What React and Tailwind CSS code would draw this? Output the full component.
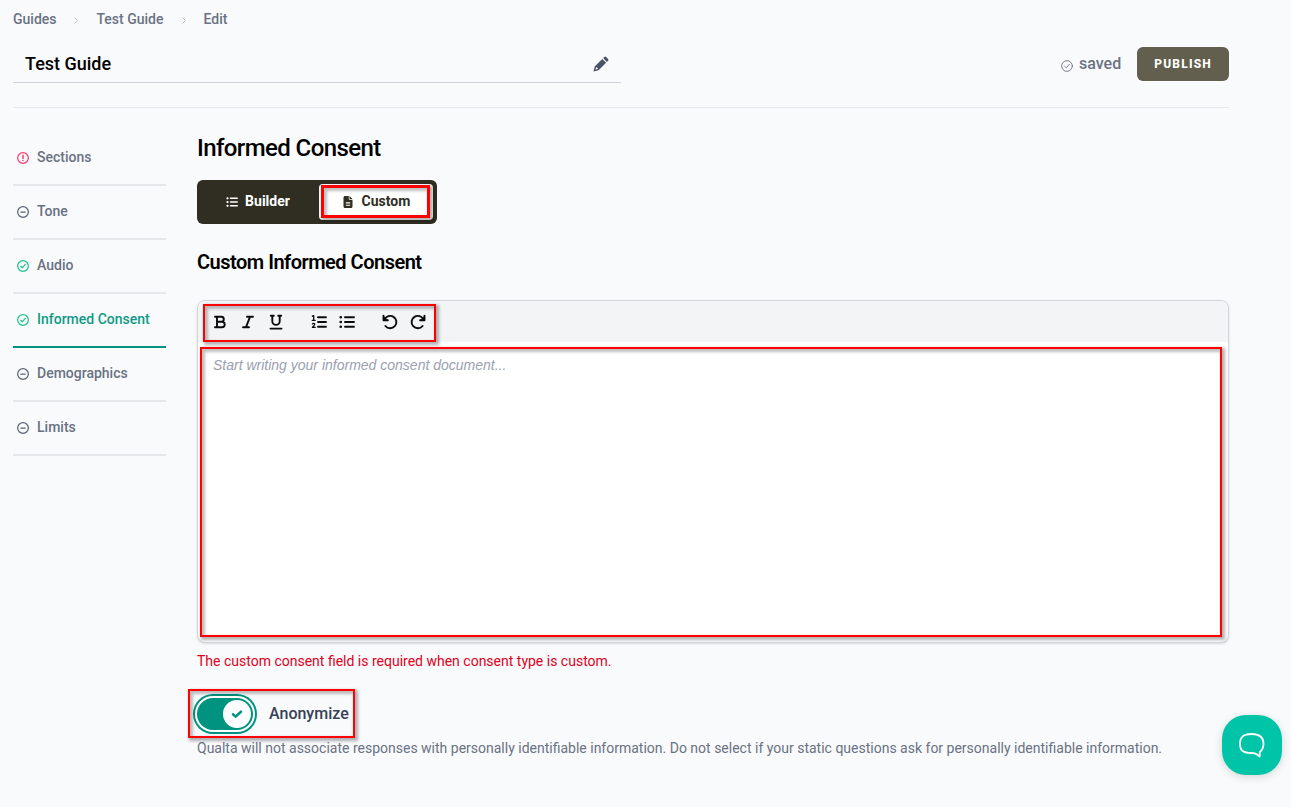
import React, { useState } from 'react';
import { FaFileLines, FaListUl } from 'react-icons/fa6';

const steps = [
  { name: 'Sections', status: 'error' },
  { name: 'Tone', status: 'pending' },
  { name: 'Audio', status: 'done' },
  { name: 'Informed Consent', status: 'done' },
  { name: 'Demographics', status: 'pending' },
  { name: 'Limits', status: 'pending' },
];

const statusColors = {
  error: 'text-[#f43f6e]',
  pending: 'text-[#5b6474]',
  done: 'text-[#1fc28b]',
  saved: 'text-[#5b6474]',
};

// red frame with a soft shadow inside and outside
const markClass = 'pointer-events-none absolute border-[#f00] shadow-[2px_2px_3px_1px_rgba(0,0,0,0.3),inset_2px_2px_3px_1px_rgba(0,0,0,0.25)]';

function StatusIcon({ status }) {
  const thin = status === 'saved';
  return (
    <svg className={`mt-0.5 size-3 shrink-0 ${statusColors[status]}`} viewBox="0 0 12 12" fill="none" stroke="currentColor" strokeWidth={thin ? 0.8 : 1.25} strokeLinecap="round" strokeLinejoin="round" aria-hidden="true">
      <circle cx="6" cy="6" r="5.35" />
      {status === 'error' && <path d="M6 3.3v3.1M6 8.4v.1" strokeWidth="1.5" />}
      {status === 'pending' && <path d="M3.8 6h4.4" />}
      {(status === 'done' || thin) && <path d="M3.7 6.3l1.6 1.5 3-3.500" />}
    </svg>
  );
}

function Chevron() {
  return (
    <svg className="mx-[18px] mt-0.5 h-[7px] w-1" viewBox="0 0 4 7" fill="none" stroke="#b9bec8" strokeWidth="1" aria-hidden="true">
      <path d="M.5.5l3 3-3 3" />
    </svg>
  );
}

function PencilIcon() {
  return (
    <svg width="16" height="16" viewBox="0 0 16 16" fill="#4a5365" aria-hidden="true">
      <path d="M11.300.9a1.300 1.300 0 011.800 0l2 2a1.300 1.300 0 010 1.800L13.900 5.900 10.100 2.100z" />
      <path fillRule="evenodd" d="M9.300 2.900l3.800 3.800-7.600 7.600L.5 15.500l1.200-5zM3.100 11.200l-.6 2.300 2.300-.6c.1-.9-.8-1.800-1.700-1.700z" />
    </svg>
  );
}

function ToolButton({ label, className = '', children }) {
  return (
    <button type="button" aria-label={label} className={`flex size-7 items-center justify-center ${className}`}>
      <svg width="16" height="16" viewBox="0 0 16 16" fill="none" stroke="#0b0b0b" strokeWidth="1.9" strokeLinecap="round" strokeLinejoin="round" aria-hidden="true">
        {children}
      </svg>
    </button>
  );
}

function Toolbar() {
  return (
    <div className="flex h-[41px] items-center rounded-t-lg bg-gray-100 pl-2">
      <ToolButton label="Bold">
        <path d="M3 2.800h6.300a2.500 2.500 0 010 5H5M5 7.800h5a2.700 2.700 0 010 5.400H3M5 2.800v10.400" />
      </ToolButton>
      <ToolButton label="Italic">
        <path d="M7 2.800h6M3 13.200h6M10 2.800L6 13.200" />
      </ToolButton>
      <ToolButton label="Underline">
        <path d="M2.800 1.800h3M10.200 1.800h3M4.300 1.800v5.400a3.700 3.700 0 007.400 0V1.800M2.500 14.600h11" />
      </ToolButton>
      <ToolButton label="Numbered list" className="ml-[15px]">
        <path d="M7 3.200h8M7 8h8M7 12.800h8" />
        <path d="M1.400 2.200l1.300-.6v4.600M1.200 6.300h3M1.400 10c.6-1 2.500-.8 2.300.5-.1.9-1.400 1.600-2.300 2.900h2.800" strokeWidth="1.300" />
      </ToolButton>
      <ToolButton label="Bulleted list">
        <path d="M6 3.200h9M6 8h9M6 12.800h9" />
        <path d="M1.700 3.200h.1M1.700 8h.1M1.700 12.800h.1" strokeWidth="2.600" />
      </ToolButton>
      <ToolButton label="Undo" className="ml-[15px]">
        <path d="M1.500 1.800v4.400h4.400M2.500 5.600a6.200 6.200 0 11.900 6.400" />
        <path d="M1.500 2.500v3.700h3.700z" fill="#0b0b0b" strokeWidth="0.600" />
      </ToolButton>
      <ToolButton label="Redo">
        <path d="M14.500 1.800v4.400h-4.400M13.500 5.600a6.200 6.200 0 10-.9 6.400" />
        <path d="M14.500 2.500v3.700h-3.700z" fill="#0b0b0b" strokeWidth="0.600" />
      </ToolButton>
    </div>
  );
}

function Header() {
  return (
    <header className="border-b border-gray-200">
      <nav aria-label="Breadcrumb" className="flex h-5 items-center text-sm font-medium text-gray-500">
        <a href="#guides">Guides</a>
        <Chevron />
        <a href="#test-guide">Test Guide</a>
        <Chevron />
        <a href="#edit">Edit</a>
      </nav>
      <div className="mt-4 mb-6 flex items-center justify-between">
        <div className="flex h-[38px] w-1/2 items-center border-b border-[#cfd3de] px-3">
          <input aria-label="Guide name" defaultValue="Test Guide" className="min-w-0 flex-1 bg-transparent text-lg font-medium text-black outline-none" />
          <button type="button" aria-label="Edit name">
            <PencilIcon />
          </button>
        </div>
        <div className="flex items-center">
          <span className="flex items-center gap-1.5 font-medium text-gray-500">
            <span className="mt-0.5">
              <StatusIcon status="saved" />
            </span>
            saved
          </span>
          <button type="button" className="ml-4 h-[34px] rounded-md bg-[#635f4e] px-[17px] text-xs font-extrabold tracking-widest text-white">PUBLISH</button>
        </div>
      </div>
    </header>
  );
}

function SideNav() {
  return (
    <nav aria-label="Guide steps" className="w-[153px] shrink-0">
      {steps.map((step) => {
        const active = step.name === 'Informed Consent';
        return (
          <a
            key={step.name}
            href={`#${step.name}`}
            className={`flex h-[54px] items-center gap-2 border-b-2 pb-0.5 pl-1 text-sm font-medium ${active ? 'border-[#009480] text-[#109a85]' : 'border-gray-200 text-gray-500'}`}
          >
            <StatusIcon status={step.status} />
            {step.name}
          </a>
        );
      })}
    </nav>
  );
}

export default function App() {
  const [anonymize, setAnonymize] = useState(true);

  return (
    <div className="min-h-screen bg-[#f9fafc] pt-[9px] pr-[62px] pb-12 pl-[13px] font-['Roboto',sans-serif]">
      <Header />
      <div className="flex gap-[31px] pt-6">
        <SideNav />
        <main className="min-w-0 flex-1">
          <h1 className="text-2xl font-medium tracking-tight text-black">Informed Consent</h1>

          <div className="mt-4 inline-flex h-11 rounded-md bg-[#302d22] p-1 text-sm font-bold">
            <button type="button" className="flex w-[118px] items-center justify-center gap-[7px] pr-1 pb-0.5 text-white">
              <FaListUl className="mt-0.5 size-3" />
              Builder
            </button>
            <button type="button" className="relative flex w-[114px] items-center justify-center gap-2 rounded-sm bg-white pb-0.5 text-[#302d22]">
              <FaFileLines className="mt-0.5 size-3" />
              Custom
              <span className={`${markClass} top-px right-[3px] bottom-0.5 left-0.5 border-3`} />
            </button>
          </div>

          <h2 className="mt-6 text-xl font-semibold tracking-tight text-black">Custom Informed Consent</h2>

          <div className="relative mt-6 rounded-lg border border-gray-300 bg-white shadow-sm">
            <Toolbar />
            <textarea
              aria-label="Informed consent document"
              placeholder="Start writing your informed consent document..."
              className="block h-[300px] w-full resize-none rounded-b-lg px-[15px] py-[13px] font-['Liberation_Sans',sans-serif] text-sm outline-none placeholder:text-gray-400 placeholder:italic"
            />
            <span className={`${markClass} top-[3px] left-[5px] h-[38px] w-[233px] border-2`} />
            <span className={`${markClass} top-[46px] right-[6px] bottom-[5px] left-0.5 border-2`} />
          </div>

          <p className="mt-2 text-sm text-[#e0001b]">The custom consent field is required when consent type is custom.</p>

          <div className="relative mt-[27px] flex w-fit items-center">
            <label className="flex items-center gap-4 font-medium text-gray-700">
              <input type="checkbox" role="switch" className="peer sr-only" checked={anonymize} onChange={(e) => setAnonymize(e.target.checked)} />
              <span className="flex h-8 w-14 items-center justify-start rounded-full bg-gray-200 p-0.5 ring-2 ring-[#009480] ring-offset-2 ring-offset-white peer-checked:justify-end peer-checked:bg-[#009480]">
                <span className="flex size-7 items-center justify-center rounded-full bg-white">
                  <svg className="size-3" viewBox="0 0 12 12" fill="none" stroke="#009480" strokeWidth="2.600" strokeLinecap="round" strokeLinejoin="round" aria-hidden="true">
                    <path d="M2 6.300L4.600 8.600 10 3.700" />
                  </svg>
                </span>
              </span>
              Anonymize
            </label>
            <span className={`${markClass} -top-[9px] -right-1.5 -bottom-2 -left-[9px] border-2`} />
          </div>

          <p className="mt-2 text-sm text-gray-500">
            Qualta will not associate responses with personally identifiable information. Do not select if your static questions ask for personally identifiable information.
          </p>
        </main>
      </div>

      <button type="button" aria-label="Open chat" className="fixed right-[9px] bottom-8 flex size-[60px] items-center justify-center rounded-3xl bg-[#00c4a7] shadow-[0_2px_8px_rgba(0,0,0,0.15)]">
        <svg width="28" height="28" viewBox="0 0 28 28" fill="none" stroke="#fff" strokeWidth="1.8" strokeLinejoin="round" aria-hidden="true">
          <path d="M13.500 3C5.500 3 2 5.600 2 12.700s3.500 9.300 11.500 9.300c2.300 0 4 .2 5.500 1.500 1 .9 1.600 1.700 2.600 2 .3-1.600-.2-3.400.4-4.600 2.200-1.900 3.500-4.200 3.500-8.200C25.500 5.600 21.500 3 13.500 3z" />
        </svg>
      </button>
    </div>
  );
}
